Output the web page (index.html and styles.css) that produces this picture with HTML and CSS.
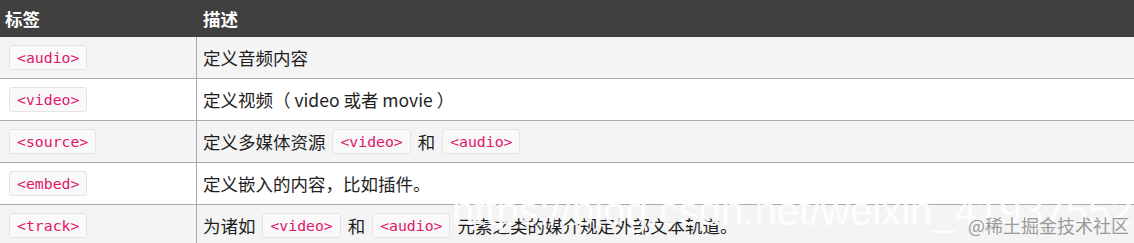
FILE: index.html
```html
<!DOCTYPE html>
<html lang="zh">
<head>
<meta charset="utf-8">
<title>媒体标签</title>
<link rel="stylesheet" href="styles.css">
</head>
<body>
<div class="page">
  <div class="ref">
    <div class="th c1">标签</div>
    <div class="th c2">描述</div>

    <div class="td c1 odd"><code class="tag">&lt;audio&gt;</code></div>
    <div class="td c2 odd">定义音频内容</div>

    <div class="td c1"><code class="tag">&lt;video&gt;</code></div>
    <div class="td c2">定义视频<span class="punct">（</span> video 或者 movie <span class="punct">）</span></div>

    <div class="td c1 odd"><code class="tag">&lt;source&gt;</code></div>
    <div class="td c2 odd">定义多媒体资源 <code class="tag">&lt;video&gt;</code> 和 <code class="tag">&lt;audio&gt;</code></div>

    <div class="td c1"><code class="tag">&lt;embed&gt;</code></div>
    <div class="td c2">定义嵌入的内容，比如插件。</div>

    <div class="td c1 odd"><code class="tag">&lt;track&gt;</code></div>
    <div class="td c2 odd">为诸如 <code class="tag">&lt;video&gt;</code> 和 <code class="tag">&lt;audio&gt;</code> 元素之类的媒介规定外部文本轨道。</div>
  </div>
  <div class="wm-url">https://blog.csdn.net/weixin_41937552</div>
  <div class="wm-jj">@稀土掘金技术社区</div>
</div>
</body>
</html>
```

FILE: styles.css
```css
html, body {
  margin: 0;
  padding: 0;
  background: #ffffff;
}

.page {
  position: relative;
  width: 1134px;
  height: 243px;
  overflow: hidden;
  font-family: "Noto Sans CJK SC", "Liberation Sans", sans-serif;
  font-size: 17.5px;
  color: #1e1e1e;
}

.ref {
  display: grid;
  grid-template-columns: 197px 1fr;
}

.th {
  height: 37px;
  background: #404040;
  color: #ffffff;
  font-weight: bold;
  display: flex;
  align-items: center;
  padding: 0 6px;
  box-sizing: border-box;
}

.th.c1 {
  padding-left: 5px;
}

.td {
  height: 42px;
  box-sizing: border-box;
  border-bottom: 1px solid #aaaaaa;
  display: flex;
  align-items: center;
  padding: 0 6px;
  white-space: pre;
  background: #ffffff;
}

.td.c1 {
  border-right: 1px solid #aaaaaa;
}

.td.odd {
  background: #f4f4f4;
}

.td .punct {
  font-family: "Noto Sans CJK SC", sans-serif;
}

.tag {
  display: inline-block;
  font-family: "DejaVu Sans Mono", monospace;
  font-size: 14.8px;
  line-height: 19px;
  color: #e3156b;
  background: #f9f9f9;
  border: 1px solid #e3e3e3;
  border-radius: 3px;
  padding: 2px 7px;
  margin: 0 3px;
}

.wm-url {
  position: absolute;
  left: 452px;
  top: 191px;
  font-family: "Liberation Sans", Arial, sans-serif;
  font-size: 40px;
  line-height: 40px;
  color: rgba(255, 255, 255, 0.92);
  white-space: nowrap;
}

.wm-jj {
  position: absolute;
  left: 968px;
  top: 216px;
  font-family: "Noto Sans CJK SC", sans-serif;
  font-size: 18px;
  line-height: 18px;
  color: #9a9a9a;
  white-space: nowrap;
}
```
